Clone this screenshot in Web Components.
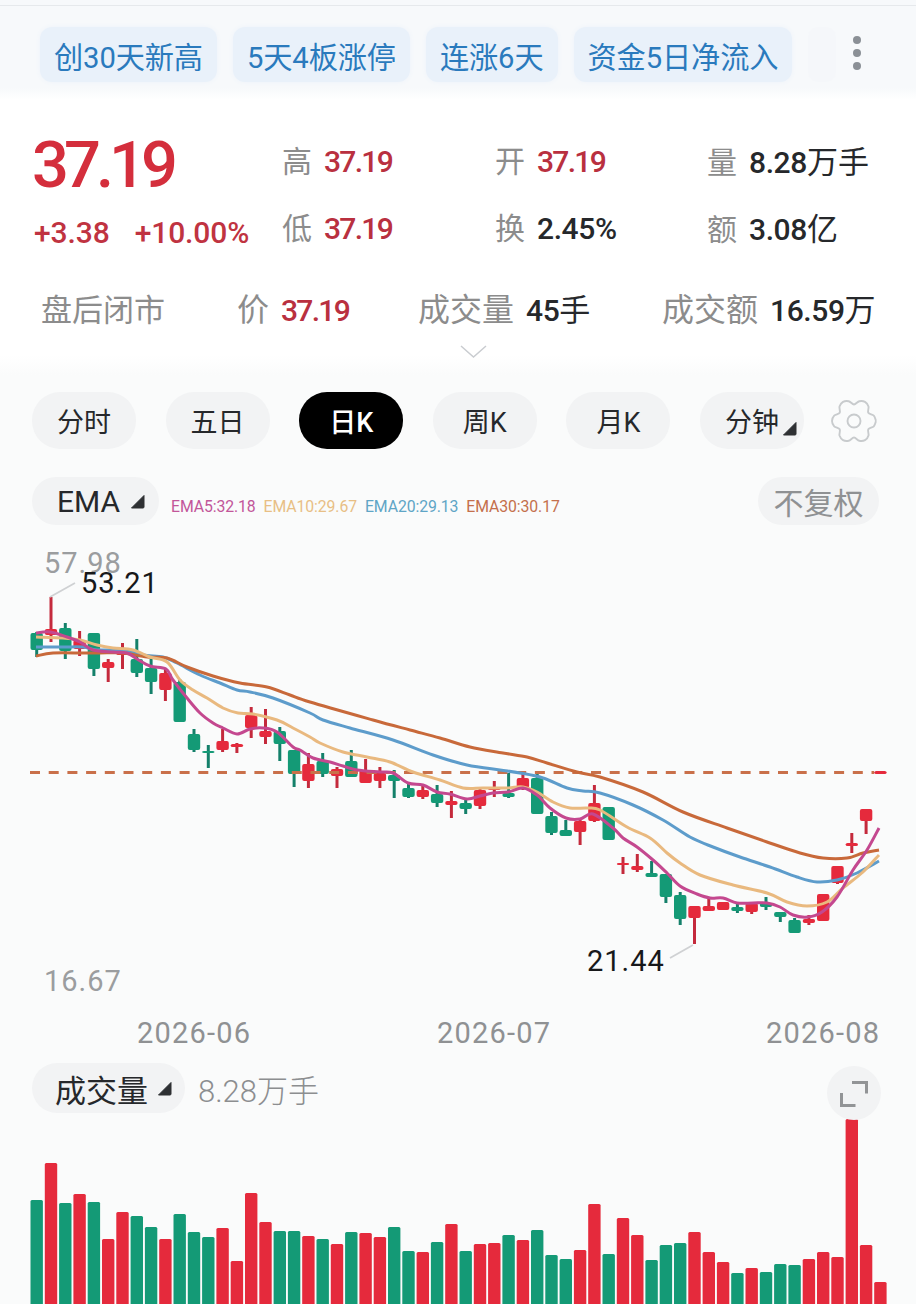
<!DOCTYPE html>
<html lang="zh">
<head>
<meta charset="utf-8">
<title>K</title>
<style>
html, body { margin: 0; padding: 0; background: #fafbfb; }
body { width: 916px; height: 1304px; overflow: hidden; font-family: Roboto, "Noto Sans CJK SC", sans-serif; }
</style>
</head>
<body>
<tag-bar>
    <tag-chip>创30天新高</tag-chip>
    <tag-chip>5天4板涨停</tag-chip>
    <tag-chip>连涨6天</tag-chip>
    <tag-chip>资金5日净流入</tag-chip>
</tag-bar>
<quote-panel></quote-panel>
<period-tabs></period-tabs>
<ema-bar></ema-bar>
<kline-chart></kline-chart>
<volume-chart></volume-chart>

<script>
const RED = "#e52a3c"
const GREEN = "#149a76"
const CARET = `<svg width="15" height="15" viewBox="0 0 15 15"><path d="M14 1.5V13a1 1 0 0 1-1 1H1.5z" fill="#2e3033" stroke="#2e3033" stroke-linejoin="round"/></svg>`

// smooth line through points, catmull-rom to bezier
function smooth(pts){
    let d = `M${pts[0][0]} ${pts[0][1]}`
    for(let i = 0; i < pts.length - 1; i++){
        const p0 = pts[i - 1] || pts[i], p1 = pts[i], p2 = pts[i + 1], p3 = pts[i + 2] || p2
        const c1x = p1[0] + (p2[0] - p0[0]) / 6, c1y = p1[1] + (p2[1] - p0[1]) / 6
        const c2x = p2[0] - (p3[0] - p1[0]) / 6, c2y = p2[1] - (p3[1] - p1[1]) / 6
        d += `C${c1x.toFixed(1)} ${c1y.toFixed(1)} ${c2x.toFixed(1)} ${c2y.toFixed(1)} ${p2[0]} ${p2[1]}`
    }
    return d
}

const barX = i => 36.7 + 14.3 * i

customElements.define("tag-chip", class TagChip extends HTMLElement{
    constructor(){
        super()
        this.attachShadow({mode: "open"}).innerHTML = `
            <style>
            :host {
                display: flex;
                align-items: center;
                height: 55px;
                padding: 0 14px;
                border-radius: 12px;
                background: #e9f1fa;
                box-shadow: 0 0 5px #edf3fa;
                color: #2a7abd;
                font-size: 29.2px;
                letter-spacing: -.1px;
                white-space: nowrap;
            }
            </style>
            <slot></slot>
        `
    }
})

customElements.define("tag-bar", class TagBar extends HTMLElement{
    constructor(){
        super()
        this.attachShadow({mode: "open"}).innerHTML = `
            <style>
            :host {
                display: block;
                position: relative;
                box-sizing: border-box;
                height: 100px;
                padding: 27px 0 0 40px;
                background: linear-gradient(#f7f9fb 0, #f7f9fb 88px, #fff 100px);
            }
            .rule { position: absolute; left: 0; right: 0; top: 5px; height: 1px; background: #e6e9ec; }
            .row { display: flex; gap: 16px; }
            .fade { width: 28px; height: 55px; background: #f5f7fa; border-radius: 10px; }
            .more { position: absolute; left: 853px; top: 36px; display: flex; flex-direction: column; gap: 5px; }
            .more i { width: 8px; height: 8px; border-radius: 50%; background: #8b9096; }
            </style>
            <div class="rule"></div>
            <div class="row"><slot></slot><div class="fade"></div></div>
            <div class="more"><i></i><i></i><i></i></div>
        `
    }
})

customElements.define("stat-item", class StatItem extends HTMLElement{
    constructor(){
        super()
        const red = this.getAttribute("tone") === "red"
        this.attachShadow({mode: "open"}).innerHTML = `
            <style>
            :host { display: flex; align-items: baseline; gap: 12px; white-space: nowrap; }
            .k { font-size: var(--key-size, 30px); color: #8c8c8c; }
            .v { font-size: 30px; font-weight: 500; color: ${red ? "#b9303f" : "#26282b"}; }
            .n { letter-spacing: ${red ? "-1.7px" : "-.4px"}; }
            .u { font-size: 31px; font-weight: 400; }
            </style>
            <span class="k">${this.getAttribute("k")}</span><span class="v"><span class="n">${this.getAttribute("v")}</span><span class="u">${this.getAttribute("u") || ""}</span></span>
        `
    }
})

customElements.define("quote-panel", class QuotePanel extends HTMLElement{
    constructor(){
        super()
        this.attachShadow({mode: "open"}).innerHTML = `
            <style>
            :host { display: block; position: relative; box-sizing: border-box; height: 275px; background: linear-gradient(#fff 255px, #fafbfb 275px); }
            .top { display: grid; grid-template-columns: 250px 213px 212px 1fr; padding: 27px 0 0 32px; }
            .price-col { grid-row: 1 / span 2; padding-top: 5px; }
            .price { font-size: 65px; line-height: 66px; font-weight: 500; color: #d42e3c; letter-spacing: -5px; }
            .chg { display: flex; gap: 25px; margin-top: 17px; margin-left: 2px; font-size: 30px; font-weight: 500; color: #c03341; letter-spacing: -.1px; }
            .cell { box-sizing: border-box; height: 67px; padding-top: 10px; }
            .bottom { display: grid; grid-template-columns: 196px 181px 244px 1fr; align-items: baseline; padding: 23px 0 0 41px; --key-size: 32px; }
            .lead { font-size: 31px; color: #8c8c8c; }
            .chev { position: absolute; left: 460px; top: 245px; }
            </style>
            <div class="top">
                <div class="price-col">
                    <div class="price">37.19</div>
                    <div class="chg"><span>+3.38</span><span>+10.00%</span></div>
                </div>
                <stat-item class="cell" k="高" v="37.19" tone="red"></stat-item>
                <stat-item class="cell" k="开" v="37.19" tone="red"></stat-item>
                <stat-item class="cell" k="量" v="8.28" u="万手"></stat-item>
                <stat-item class="cell" k="低" v="37.19" tone="red"></stat-item>
                <stat-item class="cell" k="换" v="2.45%"></stat-item>
                <stat-item class="cell" k="额" v="3.08" u="亿"></stat-item>
            </div>
            <div class="bottom">
                <span class="lead">盘后闭市</span>
                <stat-item k="价" v="37.19" tone="red"></stat-item>
                <stat-item k="成交量" v="45" u="手"></stat-item>
                <stat-item k="成交额" v="16.59" u="万"></stat-item>
            </div>
            <svg class="chev" width="27" height="13" viewBox="0 0 27 13"><path d="M1 1l12.5 11L26 1" fill="none" stroke="#c9ccd0" stroke-width="1.5"/></svg>
        `
    }
})

customElements.define("period-tabs", class PeriodTabs extends HTMLElement{
    constructor(){
        super()
        // cog outline: six lobes round the centre
        const pts = []
        for(let i = 0; i < 24; i++){
            const a = i * Math.PI / 12
            const r = [22, 20.5, 16.5, 20.5][i % 4]
            pts.push([(23 + r * Math.cos(a)).toFixed(1) * 1, (23 + r * Math.sin(a)).toFixed(1) * 1])
        }
        pts.push(pts[0])
        const tabs = ["分时", "五日", "日K", "周K", "月K", "分钟"]
        this.attachShadow({mode: "open"}).innerHTML = `
            <style>
            :host { display: flex; align-items: center; gap: 29.6px; box-sizing: border-box; height: 74px; padding: 17px 0 0 32px; background: #fafbfb; }
            .tab {
                position: relative;
                display: flex;
                align-items: center;
                justify-content: center;
                width: 104px;
                height: 57px;
                border-radius: 28px;
                background: #f2f3f4;
                color: #26282b;
                font-size: 27px;
            }
            .tab.on { background: #000; color: #fff; font-weight: 500; }
            .tab svg { position: absolute; right: 7px; bottom: 13px; }
            .gear { margin-left: -2.5px; }
            </style>
            ${tabs.map((t, i) => `<div class="tab ${i === 2 ? "on" : ""}">${t}${i === 5 ? CARET : ""}</div>`).join("")}
            <svg class="gear" width="46" height="46" viewBox="0 0 46 46" fill="none" stroke="#c8cbcd" stroke-width="1.9">
                <path d="${smooth(pts)}"/>
                <circle cx="23" cy="23" r="6.5"/>
            </svg>
        `
    }
})

customElements.define("ema-bar", class EmaBar extends HTMLElement{
    constructor(){
        super()
        this.attachShadow({mode: "open"}).innerHTML = `
            <style>
            :host { display: flex; align-items: center; box-sizing: border-box; height: 91px; padding: 28px 37px 15px 32px; background: #fafbfb; }
            .pill { display: flex; align-items: center; justify-content: center; height: 48px; border-radius: 24px; background: #f2f3f4; }
            .ema { box-sizing: border-box; width: 127px; justify-content: flex-start; gap: 10px; padding-left: 25px; font-size: 30px; color: #26282b; }
            .legend { display: flex; gap: 8px; margin: 10px 0 0 12px; font-size: 15.8px; letter-spacing: -.1px; white-space: nowrap; }
            .flat { width: 121px; margin-left: auto; font-size: 30px; color: #8f9193; }
            </style>
            <div class="pill ema">EMA${CARET}</div>
            <div class="legend">
                <span style="color:#c2569a">EMA5:32.18</span>
                <span style="color:#e8bf85">EMA10:29.67</span>
                <span style="color:#5fa5c6">EMA20:29.13</span>
                <span style="color:#c4704c">EMA30:30.17</span>
            </div>
            <div class="pill flat">不复权</div>
        `
    }
})

// [body top, body bottom, wick top, wick bottom, up?]  in page pixels
const CANDLES = [
    [633,650,632,657,0],[629,635,597,642,1],[628,651,623,659,0],[640,649,631,656,1],[633,669,633,676,0],
    [662,668,659,682,1],[652,655,643,669,1],[659,673,639,677,0],[668,682,659,694,0],[673,690,668,701,1],
    [682,722,679,722,0],[734,750,729,752,0],[751,753,745,768,0],[741,750,729,752,1],[744,747,743,753,1],
    [715,728,707,738,1],[731,737,709,744,1],[731,744,727,761,0],[750,774,750,787,0],[764,781,753,788,1],
    [761,774,753,777,0],[769,776,767,788,1],[761,777,750,777,0],[770,783,759,783,1],[773,781,767,788,1],
    [775,781,770,798,0],[788,797,783,798,0],[790,797,786,799,1],[794,803,785,807,0],[801,805,791,818,1],
    [803,809,800,814,0],[790,806,788,809,1],[788,790,781,797,1],[793,797,773,798,0],[778,788,773,790,1],
    [778,814,773,814,0],[816,833,812,835,0],[830,836,820,836,0],[821,832,820,845,1],[803,821,785,822,1],
    [807,840,807,840,0],[863,865,857,874,1],[866,870,854,872,1],[873,877,861,877,0],[874,897,874,903,0],
    [895,919,892,925,0],[906,918,906,944,1],[906,911,899,911,1],[902,910,902,910,1],[907,911,904,913,0],
    [903,912,903,914,1],[903,907,897,910,0],[912,917,912,922,0],[920,933,918,933,0],[919,923,915,925,1],
    [894,921,894,921,1],[866,883,866,884,1],[843,846,833,853,1],[809,821,809,834,1],[771,774,771,774,1]
]

const EMA_LINES = [
    ["#5d9ccb", [[36,647],[63,647],[83,647],[97,650],[123,650],[143,655],[163,657],[177,663],[200,675],[220,683],[237,690],[250,692],[273,698],[310,713],[323,720],[350,728],[393,740],[433,755],[467,765],[500,770],[520,773],[543,778],[567,788],[583,791],[600,793],[633,805],[663,820],[690,837],[713,847],[740,857],[770,867],[797,877],[817,882],[837,880],[857,873],[879,861]]],
    ["#c8693a", [[36,656],[53,653],[83,653],[100,653],[123,653],[147,657],[167,658],[187,667],[213,676],[240,683],[267,687],[290,695],[310,702],[373,720],[410,730],[440,738],[470,747],[503,753],[527,757],[547,763],[577,772],[600,777],[643,792],[683,812],[727,828],[767,842],[800,853],[823,858],[847,858],[863,853],[879,850]]],
    ["#e9b97f", [[36,637],[63,638],[80,640],[97,645],[113,648],[133,650],[150,657],[167,662],[180,680],[193,690],[207,698],[223,708],[238,713],[253,714],[277,720],[293,728],[310,737],[320,743],[343,752],[367,757],[390,762],[413,772],[440,780],[463,788],[483,788],[507,788],[523,787],[537,792],[553,802],[570,808],[587,808],[600,810],[627,827],[650,838],[667,853],[680,863],[700,875],[733,885],[767,893],[787,902],[807,906],[827,902],[843,888],[863,872],[879,855]]],
    ["#c4488f", [[36,633],[50,632],[67,637],[80,642],[93,650],[113,652],[127,653],[137,659],[150,666],[166,669],[173,680],[187,698],[200,713],[213,723],[223,728],[237,734],[250,729],[263,728],[277,732],[293,747],[300,750],[313,758],[330,762],[343,766],[357,770],[380,772],[393,773],[408,783],[423,785],[437,792],[450,794],[467,799],[480,796],[493,793],[508,792],[523,788],[537,795],[550,808],[566,818],[580,819],[593,814],[613,828],[623,838],[637,847],[653,860],[667,873],[680,886],[697,894],[710,898],[723,898],[737,903],[753,903],[767,903],[780,907],[793,915],[808,917],[822,912],[837,897],[853,870],[867,850],[879,828]]]
]

customElements.define("kline-chart", class KlineChart extends HTMLElement{
    constructor(){
        super()
        const candles = CANDLES.map((c, i) => {
            const x = barX(i), col = c[4] ? RED : GREEN, wick = c[4] ? "#c42a3c" : "#14806a"
            return `<line x1="${x}" x2="${x}" y1="${c[2]}" y2="${c[3]}" stroke="${wick}" stroke-width="3"/>` +
                `<rect x="${x - 6.2}" y="${c[0]}" width="12.4" height="${c[1] - c[0]}" rx="2" fill="${col}"/>`
        }).join("")
        const lines = EMA_LINES.map(l => `<path d="${smooth(l[1])}" fill="none" stroke="${l[0]}" stroke-width="3" stroke-linejoin="round"/>`).join("")
        this.attachShadow({mode: "open"}).innerHTML = `
            <style>
            :host { display: block; position: relative; height: 515px; background: #fafbfb; }
            svg { display: block; }
            .lab { position: absolute; font-size: 29px; letter-spacing: 1px; line-height: 32px; white-space: nowrap; }
            .grey { color: #9b9d9f; }
            .dark { color: #17181a; }
            .axis { display: grid; grid-template-columns: 300px 329px auto; padding: 2px 0 0 137px; font-size: 29px; letter-spacing: 1.2px; line-height: 32px; color: #8f9193; }
            </style>
            <svg width="916" height="475" viewBox="0 540 916 475">
                ${candles}
                <line x1="30" x2="874" y1="772.5" y2="772.5" stroke="#c9704a" stroke-width="3" stroke-dasharray="10 8.7"/>
                ${lines}
                <path d="M50 597L75 583M670 958L693 945" stroke="#cfd1d3" stroke-width="1.8" fill="none"/>
            </svg>
            <span class="lab grey" style="left:44px;top:7px">57.98</span>
            <span class="lab dark" style="left:81px;top:27px">53.21</span>
            <span class="lab dark" style="left:587px;top:405px">21.44</span>
            <span class="lab grey" style="left:44px;top:425px">16.67</span>
            <div class="axis"><span>2026-06</span><span>2026-07</span><span>2026-08</span></div>
        `
    }
})

customElements.define("volume-chart", class VolumeChart extends HTMLElement{
    constructor(){
        super()
        // top of each bar in page pixels, with 1 for a red bar
        const vols = [[1200,0],[1163,1],[1203,0],[1194,1],[1202,0],[1239,1],[1212,1],[1216,0],[1227,0],[1239,1],
            [1214,0],[1232,0],[1237,0],[1228,1],[1261,1],[1193,1],[1222,1],[1231,0],[1231,0],[1236,1],
            [1239,0],[1244,1],[1232,0],[1233,1],[1237,1],[1227,0],[1251,0],[1252,1],[1242,0],[1224,1],
            [1251,0],[1244,1],[1243,1],[1235,0],[1240,1],[1230,0],[1255,0],[1259,0],[1250,1],[1204,1],
            [1254,0],[1218,1],[1235,1],[1260,0],[1245,0],[1243,0],[1232,1],[1252,1],[1262,1],[1273,0],
            [1268,1],[1272,0],[1264,0],[1265,0],[1259,1],[1252,1],[1257,1],[1119,1],[1245,1],[1282,1]]
        const bars = vols.map((v, i) => `<rect x="${barX(i) - 6.2}" y="${v[0]}" width="12.4" height="${1320 - v[0]}" rx="1.5" fill="${v[1] ? RED : GREEN}"/>`).join("")
        this.attachShadow({mode: "open"}).innerHTML = `
            <style>
            :host { display: block; position: relative; background: #fafbfb; }
            .head { display: flex; align-items: center; gap: 13px; height: 50px; margin: 8px 0 0; padding-left: 32px; }
            .pill { box-sizing: border-box; display: flex; align-items: center; gap: 9px; width: 153px; height: 50px; padding-left: 23px; border-radius: 25px; background: #f2f3f4; font-size: 31px; color: #26282b; }
            .num { font-size: 31px; color: #8c8e90; font-weight: 300; }
            .expand { position: absolute; left: 827px; top: 3px; width: 54px; height: 54px; border-radius: 50%; background: #f2f3f4; }
            svg { display: block; }
            </style>
            <div class="head">
                <div class="pill">成交量${CARET}</div>
                <span class="num">8.28万手</span>
            </div>
            <div class="expand">
                <svg width="54" height="54" viewBox="0 0 54 54" fill="none" stroke="#929496" stroke-width="3">
                    <path d="M25 16.5h14.5v11M14.5 27v12.5h14"/>
                </svg>
            </div>
            <svg width="916" height="191" viewBox="0 1113 916 191">${bars}</svg>
        `
    }
})
</script>
</body>
</html>
